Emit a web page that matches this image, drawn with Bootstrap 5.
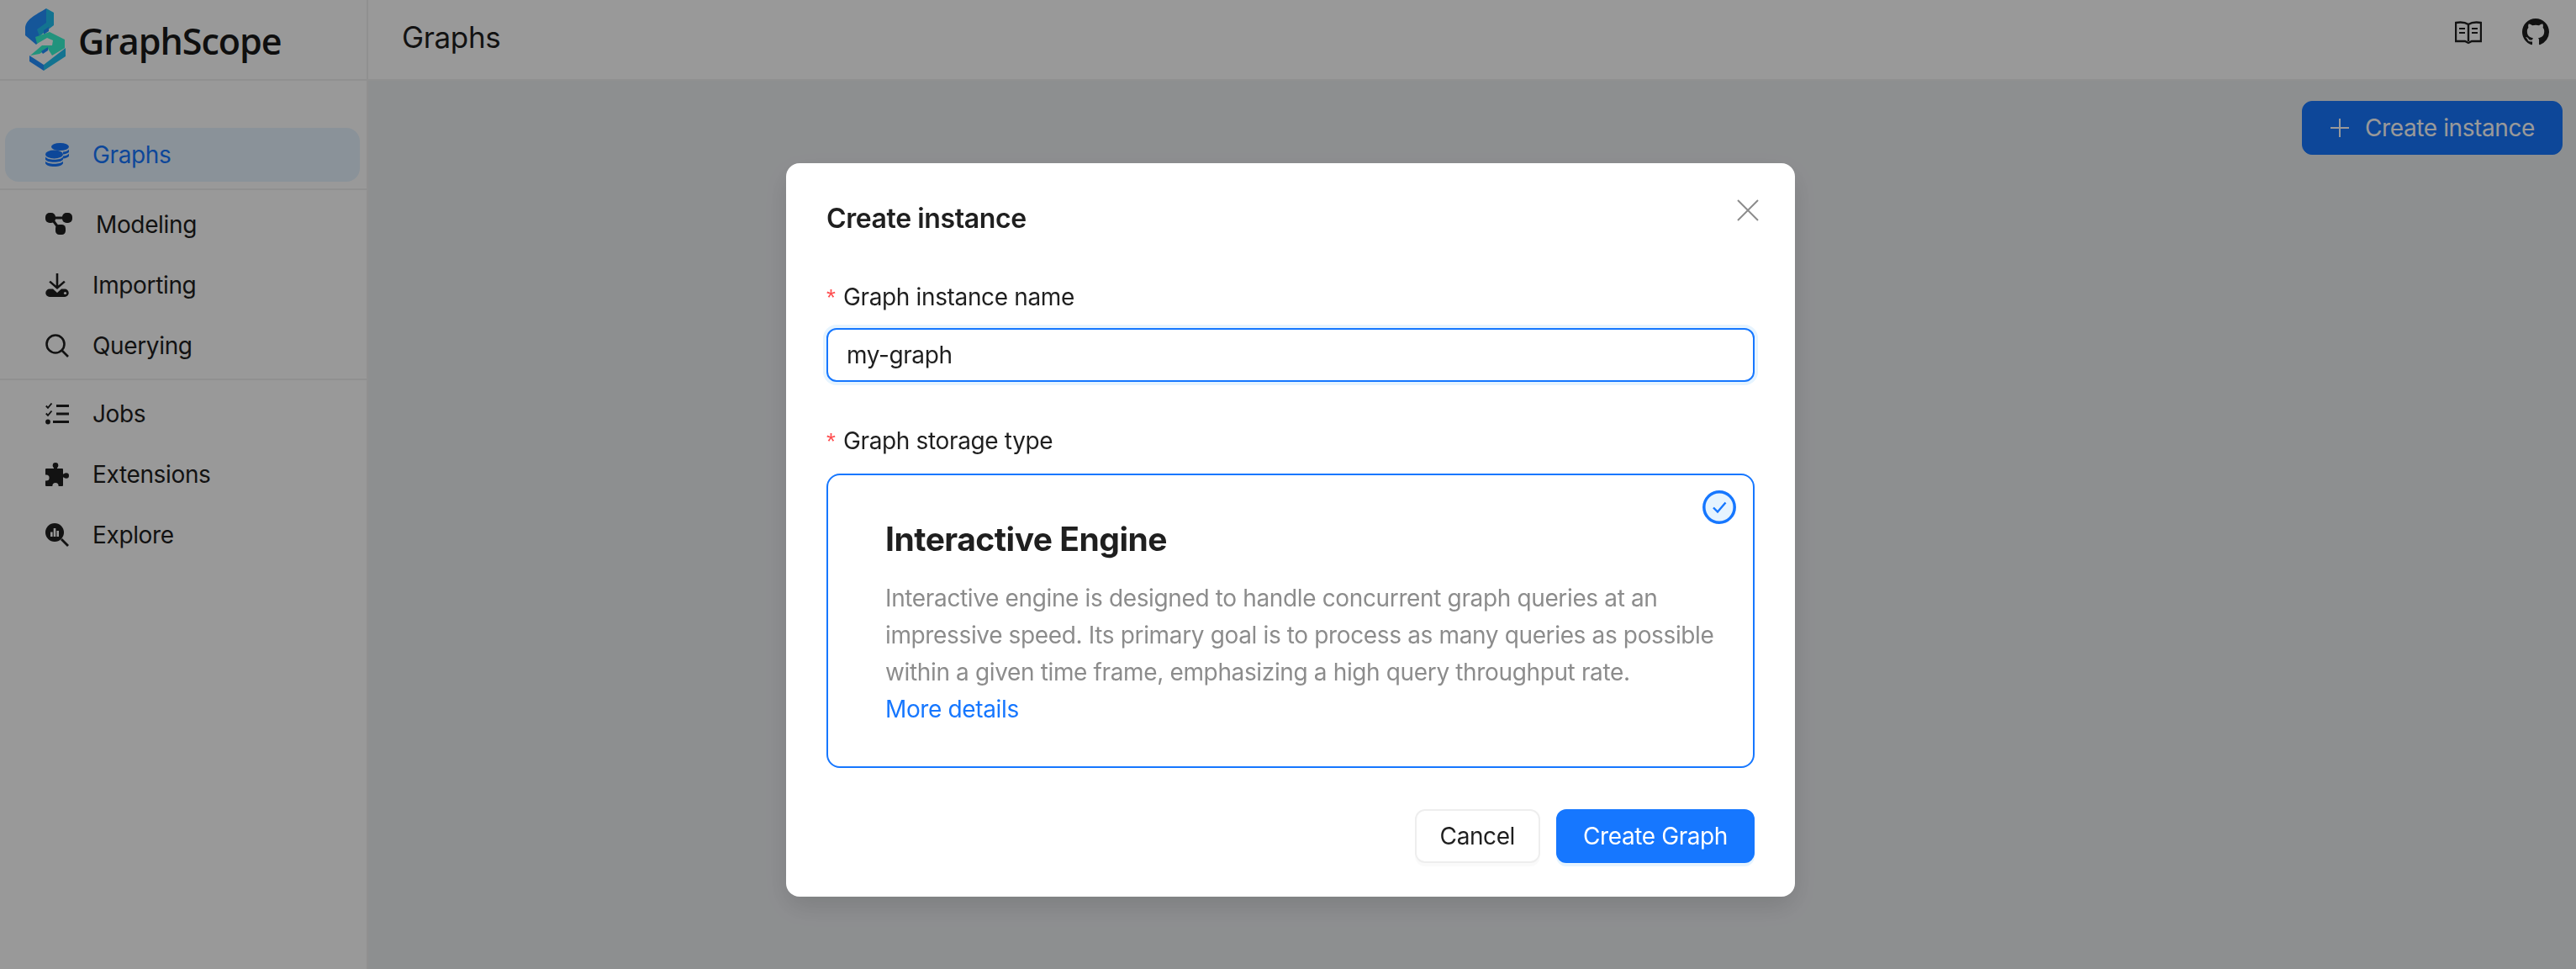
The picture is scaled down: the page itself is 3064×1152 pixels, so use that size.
<!DOCTYPE html>
<html lang="en">
<head>
    <meta charset="UTF-8">
    <meta name="viewport" content="width=device-width, initial-scale=1.0">
    <title>GraphScope</title>
    <link href="https://cdn.jsdelivr.net/npm/bootstrap@5.3.0/dist/css/bootstrap.min.css" rel="stylesheet">
    <style>
        html, body { height: 100%; }
        body { font-family: Inter, "Liberation Sans", sans-serif; font-size: 28px; letter-spacing: -.36px; color: #1f1f1f; overflow: hidden; background: #fff; }
        .app-shell { height: 1152px; }
        .side { width: 438px; border-right: 2px solid #f0f0f0; background: #fff; flex: none; }
        .brand { height: 96px; border-bottom: 2px solid #f0f0f0; padding-left: 30px; gap: 15px; }
        .brand-text { font-family: "Open Sans", sans-serif; font-weight: 600; font-size: 43px; color: #1a1a1a; letter-spacing: -1px; line-height: 1; margin-top: 3px; }
        .side-menu { padding-top: 56px; }
        .side-item { height: 72px; padding-left: 54px; gap: 28px; color: #1f1f1f; line-height: 1; text-decoration: none; }
        .side-item svg { width: 28px; height: 28px; flex: none; }
        .side-item svg.wide-icon { width: 32px; }
        .side-item.active { height: 64px; margin: 0 8px 0 6px; padding-left: 48px; border-radius: 16px; background: #e6f4ff; color: #1677ff; }
        .side-rule { border-top: 2px solid #f0f0f0; }
        .rule-top { margin-top: 8px; margin-bottom: 5px; }
        .rule-mid { margin-top: 3px; margin-bottom: 4px; }
        .main-area { background: #eceef1; }
        .top-bar { height: 96px; border-bottom: 2px solid #f0f0f0; background: #fff; padding: 0 32px 0 40px; }
        .top-title { font-size: 35px; line-height: 1; margin-bottom: 6px; }
        .top-icons { gap: 48px; margin-bottom: 18px; }
        .add-btn { font-size: 28px; letter-spacing: -.4px; height: 64px; border-radius: 12px; background: #1677ff; border-color: #1677ff; padding: 0 32px 0 32px; gap: 18px; margin: 24px 16px 0 0; }
        .dim { --bs-backdrop-opacity: .4; }
        .dialog-box { width: 1200px; max-width: 1200px; margin: 194px 0 0 935px; }
        .dialog-box .modal-content { border: 0; border-radius: 16px; padding: 48px 48px 40px; height: 872px; box-shadow: 0 12px 32px rgba(0,0,0,.12); }
        .dialog-title { font-size: 32px; font-weight: 600; line-height: 1; color: #1f1f1f; margin: 2px 0 0; letter-spacing: -.4px; }
        .dialog-close { width: 30px; height: 30px; position: absolute; right: 41px; top: 41px; padding: 0; border: 0; background: none; }
        .field-label { margin: 0; line-height: 36px; }
        .label-first { margin-top: 59px; }
        .label-second { margin-top: 52px; }
        .field-gap { margin-top: 19px; }
        .field-gap-big { margin-top: 21px; }
        .field-label .req { display: inline-block; width: 20px; color: #ff4d4f; font-family: "Liberation Sans", sans-serif; font-size: 28px; line-height: 1; }
        .name-input { height: 64px; font-size: 28px; letter-spacing: -.4px; border: 2px solid #1677ff; border-radius: 12px; padding: 0 22px; box-shadow: 0 0 0 4px #e6f4ff; color: #1f1f1f; }
        .name-input:focus { border-color: #1677ff; box-shadow: 0 0 0 4px #e6f4ff; }
        .engine-box { height: 350px; border: 2px solid #1677ff; border-radius: 16px; padding: 51px 44px 0 68px; position: relative; }
        .engine-title { font-size: 39px; font-weight: 650; line-height: 50px; margin: 0 0 23px; color: #1f1f1f; letter-spacing: -.5px; }
        .engine-text { color: #8c8c8c; line-height: 44px; margin: 0; }
        .engine-link { color: #1677ff; text-decoration: none; line-height: 44px; }
        .engine-check { width: 40px; height: 40px; position: absolute; top: 18px; right: 20px; }
        .dlg-actions { gap: 19px; }
        .dlg-btn { height: 64px; font-size: 28px; letter-spacing: -.4px; border-radius: 12px; line-height: 1; }
        .dlg-cancel { border: 2px solid #eeeeee; background: #fff; color: #1f1f1f; padding: 0 28px; box-shadow: 0 4px 0 rgba(0,0,0,.02); }
        .dlg-ok { background: #1677ff; border: 2px solid #1677ff; color: #fff; padding: 0 30px; box-shadow: 0 4px 0 rgba(5,145,255,.1); }
    </style>
</head>
<body>
    <div class="app-shell d-flex">
        <aside class="side d-flex flex-column">
            <div class="brand d-flex align-items-center">
                <svg width="48" height="74" viewBox="0 0 48 74">
                    <path d="M25 0C12 8 0 13 0 24v8l13 11 5-5V25l7-7z" fill="#2390ff"/>
                    <path d="m25 0 9 5v15L17 33l-3-8 11-8z" fill="#21c0f0"/>
                    <path d="m22 26 6-4v5l-6 4z" fill="#2390ff"/>
                    <path d="m5 56 17 11v7L5 63z" fill="#2390ff"/>
                    <path d="M22 67 48 47v10L22 74z" fill="#21c0f0"/>
                    <path d="m12 34 17-6 18 9v10l-15 9-5-8-10 6-11 2 14-12h12l1-6-7-3-12 7z" fill="#37f5d0"/>
                    <path d="m19 51 8-5v4l-6 4z" fill="#2390ff"/>
                </svg>
                <span class="brand-text">GraphScope</span>
            </div>
            <nav class="side-menu d-flex flex-column">
                <a class="side-item active d-flex align-items-center">
                    <svg viewBox="0 0 28 28" fill="currentColor"><ellipse cx="17.500" cy="4.500" rx="10.500" ry="4.500"/><path d="M21 10.500c3-.3 5.500-1.200 7-2.800v3c-1 1.500-4 2.500-7 2.800zM21 15.500c3-.3 5.500-1.200 7-2.800v3c-1 1.500-4 2.500-7 2.800z"/><ellipse cx="10.500" cy="13.500" rx="10.500" ry="5"/><path d="M0 16.500c1.500 2 5.500 3.300 10.500 3.300s9-1.300 10.500-3.300v3c-1 2-5 3.300-10.500 3.300S1 21.500 0 19.500zM0 21.800c1.500 2 5.500 3 10.500 3s9-1 10.500-3v2.400c-1 2.300-5 3.800-10.500 3.800S1 26.500 0 24.200z"/></svg>
                    <span>Graphs</span>
                </a>
                <div class="side-rule rule-top"></div>
                <a class="side-item d-flex align-items-center">
                    <svg class="wide-icon" viewBox="0 0 32 28" fill="currentColor"><rect x="0" y="0" width="12" height="12" rx="5"/><rect x="20" y="0" width="12" height="12" rx="5"/><rect x="12" y="14" width="12" height="12" rx="4.500"/><path d="M8 4.500h14v3H8z"/><path d="m7 9 2.400-2L17 17l-2.500 2z"/></svg>
                    <span>Modeling</span>
                </a>
                <a class="side-item d-flex align-items-center">
                    <svg viewBox="0 0 28 28" fill="currentColor"><path d="M12.700 0h2.600v14.500l6.700-5.800 1.700 1.900L14 19 4.300 10.600 6 8.700l6.700 5.800z"/><path d="M5 18.500h4l5 4.500 5-4.500h4a4.750 4.750 0 0 1 0 9.500H5a4.750 4.750 0 0 1 0-9.500z"/><circle cx="23.500" cy="23.500" r="1.600" fill="#fff"/></svg>
                    <span>Importing</span>
                </a>
                <a class="side-item d-flex align-items-center">
                    <svg viewBox="0 0 28 28" fill="none" stroke="currentColor" stroke-width="2.600"><circle cx="12" cy="12" r="10.500"/><path d="m19.500 19.500 7.500 7.500"/></svg>
                    <span>Querying</span>
                </a>
                <div class="side-rule rule-mid"></div>
                <a class="side-item d-flex align-items-center">
                    <svg viewBox="0 0 28 28" fill="currentColor"><path d="M13 3h15v3H13zM13 12.500h15v3H13zM9 22h19v3H9z"/><circle cx="3" cy="23.500" r="2.900"/><path d="M.8 4.500 3 6.800 7.500 1.500M.8 13.500 3 15.800l4.500-5.300" fill="none" stroke="currentColor" stroke-width="1.900"/></svg>
                    <span>Jobs</span>
                </a>
                <a class="side-item d-flex align-items-center">
                    <svg viewBox="0 0 28 28" fill="currentColor"><circle cx="12" cy="3.300" r="3.300"/><path d="M10 5h4v3h-4zM20 13.500h4v4h-4z"/><circle cx="24.800" cy="15.500" r="3.200"/><rect x="0" y="7" width="21" height="21" rx="1"/><circle cx="1" cy="18" r="3.600" fill="#fff"/><circle cx="12" cy="27.500" r="3.600" fill="#fff"/></svg>
                    <span>Extensions</span>
                </a>
                <a class="side-item d-flex align-items-center">
                    <svg viewBox="0 0 28 28" fill="currentColor"><circle cx="11" cy="11" r="11"/><path d="m18 20 2-2 8 8-2 2z"/><path d="M6 10.500h2.600V16H6zM9.700 6h2.600v10H9.700zM13.400 9h2.600v7h-2.600z" fill="#fff"/></svg>
                    <span>Explore</span>
                </a>
            </nav>
        </aside>
        <div class="main-area flex-grow-1 d-flex flex-column">
            <header class="top-bar d-flex align-items-center justify-content-between">
                <div class="top-title">Graphs</div>
                <div class="top-icons d-flex align-items-center">
                    <svg width="32" height="32" viewBox="0 0 32 32" fill="none" stroke="#1f1f1f" stroke-width="2.400"><path d="M16 7c-3-2-9-3-15-2v22h11l4 2 4-2h11V5c-6-1-12 0-15 2zM16 7v20"/><path d="M5 12h7M5 17h7M20 12h7M20 17h7" stroke-width="2"/></svg>
                    <svg width="32" height="32" viewBox="0 0 16 16" fill="#1f1f1f"><path d="M8 0C3.580 0 0 3.580 0 8c0 3.540 2.290 6.530 5.470 7.590.4.070.55-.17.55-.38 0-.19-.01-.82-.01-1.490-2.010.37-2.530-.49-2.690-.94-.09-.23-.48-.94-.82-1.130-.28-.15-.68-.52-.01-.53.630-.01 1.080.58 1.230.82.720 1.210 1.870.87 2.330.66.070-.52.280-.87.510-1.070-1.780-.2-3.640-.89-3.640-3.950 0-.87.310-1.590.820-2.150-.08-.2-.36-1.020.08-2.120 0 0 .67-.21 2.200.82.640-.18 1.320-.27 2-.27s1.360.09 2 .27c1.530-1.040 2.200-.82 2.200-.82.440 1.100.160 1.920.080 2.120.510.560.820 1.270.820 2.150 0 3.070-1.870 3.750-3.650 3.950.29.250.54.730.54 1.480 0 1.070-.01 1.930-.01 2.200 0 .21.150.46.550.38A8.010 8.010 0 0 0 16 8c0-4.420-3.580-8-8-8z"/></svg>
                </div>
            </header>
            <div class="d-flex justify-content-end">
                <button type="button" class="btn btn-primary add-btn d-flex align-items-center">
                    <svg width="24" height="24" viewBox="0 0 24 24" stroke="#fff" stroke-width="2"><path d="M12 1v22M1 12h22"/></svg>
                    <span>Create instance</span>
                </button>
            </div>
        </div>
    </div>

    <div class="dim modal-backdrop show"></div>
    <div class="modal d-block" tabindex="-1">
        <div class="modal-dialog dialog-box">
            <div class="modal-content">
                <button type="button" class="dialog-close" aria-label="Close">
                    <svg class="d-block" width="30" height="30" viewBox="0 0 30 30" stroke="#8c8c8c" stroke-width="2"><path d="M3 3l24 24M27 3 3 27"/></svg>
                </button>
                <h5 class="dialog-title">Create instance</h5>
                <label class="field-label label-first"><span class="req">*</span>Graph instance name</label>
                <input type="text" class="form-control name-input field-gap" value="my-graph">
                <label class="field-label label-second"><span class="req">*</span>Graph storage type</label>
                <div class="engine-box field-gap-big">
                    <svg class="engine-check" viewBox="0 0 40 40"><circle cx="20" cy="20" r="18.200" fill="#e6f4ff" stroke="#1677ff" stroke-width="3.500"/><path d="m13 20.500 5 5 9.500-11" fill="none" stroke="#1677ff" stroke-width="2.400"/></svg>
                    <h4 class="engine-title">Interactive Engine</h4>
                    <p class="engine-text">Interactive engine is designed to handle concurrent graph queries at an impressive speed. Its primary goal is to process as many queries as possible within a given time frame, emphasizing a high query throughput rate.</p>
                    <a class="engine-link" href="#">More details</a>
                </div>
                <div class="d-flex justify-content-end dlg-actions mt-auto">
                    <button type="button" class="btn dlg-btn dlg-cancel">Cancel</button>
                    <button type="button" class="btn dlg-btn dlg-ok">Create Graph</button>
                </div>
            </div>
        </div>
    </div>

    <script src="https://cdn.jsdelivr.net/npm/bootstrap@5.3.0/dist/js/bootstrap.bundle.min.js"></script>
</body>
</html>
